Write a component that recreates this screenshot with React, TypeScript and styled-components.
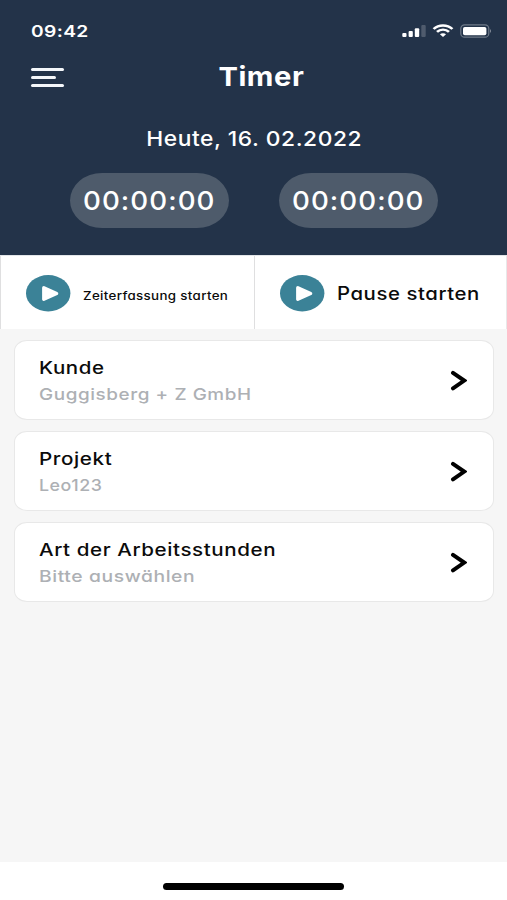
import React from "react";
import styled, { createGlobalStyle } from "styled-components";

const GlobalStyle = createGlobalStyle`
  *, *::before, *::after { box-sizing: border-box; }
  body { margin: 0; background: #f6f6f6; }
`;

const Screen = styled.div`
  width: 507px;
  height: 900px;
  display: flex;
  flex-direction: column;
  overflow: hidden;
  background: #f6f6f6;
  color: #0b0b0b;
  font-family: Inter, "Liberation Sans", sans-serif;
  font-feature-settings: "cv11" 1;
`;

const Header = styled.header`
  height: 255px;
  flex: none;
  background: #233349;
  color: #fff;
`;

const StatusBar = styled.div`
  height: 62px;
  padding: 0 15px 0 31px;
  display: flex;
  align-items: center;
  justify-content: space-between;
`;

const StatusIcons = styled.svg`
  width: 91px;
  height: 16px;
  display: block;
`;

/* Wide lettering: glyphs are widened horizontally from their anchor side. */
const Label = styled.span<{
  $size: number;
  $weight?: number;
  $stretch: number;
  $tracking?: number;
  $anchor?: "left" | "center";
}>`
  display: block;
  margin: 0;
  white-space: nowrap;
  line-height: 26px;
  font-size: ${(p) => p.$size}px;
  font-weight: ${(p) => p.$weight ?? 500};
  letter-spacing: ${(p) => p.$tracking ?? 0.5}px;
  transform: scaleX(${(p) => p.$stretch});
  transform-origin: ${(p) => p.$anchor ?? "left"} center;
`;

const TitleBar = styled.div`
  height: 30px;
  padding: 0 16px 0 31px;
  display: grid;
  grid-template-columns: 33px 1fr 33px;
  align-items: center;
  justify-items: center;
`;

const MenuButton = styled.button`
  width: 33px;
  height: 29px;
  padding: 0;
  border: 0;
  background: none;
  display: flex;
  flex-direction: column;
  justify-content: center;
  gap: 5px;
`;

const MenuLine = styled.span<{ $width: number }>`
  width: ${(p) => p.$width}px;
  height: 3px;
  border-radius: 1.5px;
  background: #f4f7fa;
`;

const DateRow = styled.div`
  height: 81px;
  padding: 34px 0 0 2px;
  display: flex;
  justify-content: center;
`;

const Counters = styled.div`
  display: flex;
  justify-content: center;
  gap: 50px;
`;

const Counter = styled.div`
  width: 159px;
  height: 55px;
  padding: 1px 0 0 1px;
  border-radius: 32px / 27.5px;
  background: #4e5b6b;
  display: flex;
  align-items: center;
  justify-content: center;
`;

const Actions = styled.div`
  height: 74px;
  flex: none;
  display: grid;
  grid-template-columns: 254px 253px;
  background: #fff;
  border-top: 1px solid #e3e6e9;
  border-right: 1px solid #e8e8e9;
`;

const Action = styled.button`
  padding: 2px 0 0 25px;
  border: 0;
  border-left: 1px solid #dfdfe0;
  background: none;
  color: inherit;
  font: inherit;
  font-feature-settings: inherit;
  display: flex;
  align-items: center;
  gap: 12px;
`;

const PlayIcon = styled.svg`
  width: 45px;
  height: 37px;
  flex: none;
`;

const ActionText = styled.span<{ $drop: number }>`
  padding-top: ${(p) => p.$drop}px;
`;

const List = styled.main`
  flex: 1;
  padding: 11px 13px 0 14px;
  display: flex;
  flex-direction: column;
  gap: 11px;
`;

const Card = styled.div`
  height: 80px;
  padding: 1px 26px 0 24px;
  border: 1px solid #e8e8e8;
  border-radius: 13px / 11px;
  background: #fff;
  display: flex;
  align-items: center;
  justify-content: space-between;
`;

const CardText = styled.div`
  display: flex;
  flex-direction: column;
`;

const Muted = styled.div`
  color: #adb0b4;
`;

const Chevron = styled.svg`
  width: 17px;
  height: 22px;
`;

const HomeArea = styled.footer`
  height: 38px;
  flex: none;
  padding-top: 21px;
  background: #fff;
  display: flex;
  justify-content: center;
  align-items: flex-start;
`;

const HomeIndicator = styled.div`
  width: 181px;
  height: 7px;
  border-radius: 4px;
  background: #000;
`;

const Play = () => (
  <PlayIcon viewBox="0 0 45 37">
    <ellipse cx="22.2" cy="18.2" rx="22.2" ry="18.2" fill="#3b8297" />
    <path d="M17.8 12.7 L30.6 18.5 L17.8 24.3 Z" fill="#fff" stroke="#fff" strokeWidth="3.4" strokeLinejoin="round" />
  </PlayIcon>
);

const items = [
  { title: "Kunde", value: "Guggisberg + Z GmbH", titleStretch: 1.19, valueStretch: 1.145 },
  { title: "Projekt", value: "Leo123", titleStretch: 1.2, valueStretch: 1.08 },
  { title: "Art der Arbeitsstunden", value: "Bitte auswählen", titleStretch: 1.195, valueStretch: 1.17 },
];

export default function App() {
  return (
    <>
      <GlobalStyle />
      <Screen>
        <Header>
          <StatusBar>
            <Label $size={16.3} $weight={600} $stretch={1.18} $tracking={0.3}>09:42</Label>
            <StatusIcons viewBox="0 0 91 16" fill="#fff">
              <rect x="1.3" y="10" width="4.2" height="4" rx="1" />
              <rect x="7.6" y="8" width="4.2" height="6" rx="1" />
              <rect x="13.8" y="5.2" width="4.4" height="8.8" rx="1" />
              <rect x="20.3" y="2.1" width="4.4" height="11.9" rx="1" opacity="0.2" />
              <g transform="translate(42 13.7) scale(1.22 1.05)" fill="none" stroke="#fff" strokeWidth="2.2">
                <path d="M-7.7 -7.4 A10.7 10.7 0 0 1 7.7 -7.4" />
                <path d="M-4.9 -4.6 A6.8 6.8 0 0 1 4.9 -4.6" />
                <path d="M-2.5 -2.3 A3.4 3.4 0 0 1 2.5 -2.3 L0 0.3 Z" fill="#fff" stroke="none" />
              </g>
              <rect x="59.8" y="1.8" width="28" height="12.4" rx="3.8" fill="none" stroke="#fff" strokeOpacity="0.35" strokeWidth="1.2" />
              <rect x="62" y="3.9" width="23.4" height="8.3" rx="1.8" />
              <path d="M89 6 Q91 8 89 10 Z" opacity="0.45" />
            </StatusIcons>
          </StatusBar>
          <TitleBar>
            <MenuButton aria-label="Menü">
              <MenuLine $width={33} />
              <MenuLine $width={25} />
              <MenuLine $width={33} />
            </MenuButton>
            <Label as="h1" $size={26} $weight={700} $stretch={1.12} $anchor="center">Timer</Label>
          </TitleBar>
          <DateRow>
            <Label $size={20.5} $stretch={1.11} $anchor="center">Heute, 16. 02.2022</Label>
          </DateRow>
          <Counters>
            <Counter>
              <Label $size={26} $stretch={1.065} $tracking={1} $anchor="center">00:00:00</Label>
            </Counter>
            <Counter>
              <Label $size={26} $stretch={1.065} $tracking={1} $anchor="center">00:00:00</Label>
            </Counter>
          </Counters>
        </Header>
        <Actions>
          <Action>
            <Play />
            <ActionText $drop={5}>
              <Label $size={11.6} $stretch={1.15} $tracking={0.3}>Zeiterfassung starten</Label>
            </ActionText>
          </Action>
          <Action>
            <Play />
            <ActionText $drop={1}>
              <Label $size={18} $stretch={1.13}>Pause starten</Label>
            </ActionText>
          </Action>
        </Actions>
        <List>
          {items.map((item) => (
            <Card key={item.title}>
              <CardText>
                <Label $size={17.2} $stretch={item.titleStretch}>{item.title}</Label>
                <Muted>
                  <Label $size={16.5} $stretch={item.valueStretch}>{item.value}</Label>
                </Muted>
              </CardText>
              <Chevron viewBox="0 0 17 22" fill="none" stroke="#000" strokeWidth="4" strokeLinecap="round">
                <path d="M3 2.9 L14.2 10.6 L3 18.3" />
              </Chevron>
            </Card>
          ))}
        </List>
        <HomeArea>
          <HomeIndicator />
        </HomeArea>
      </Screen>
    </>
  );
}
